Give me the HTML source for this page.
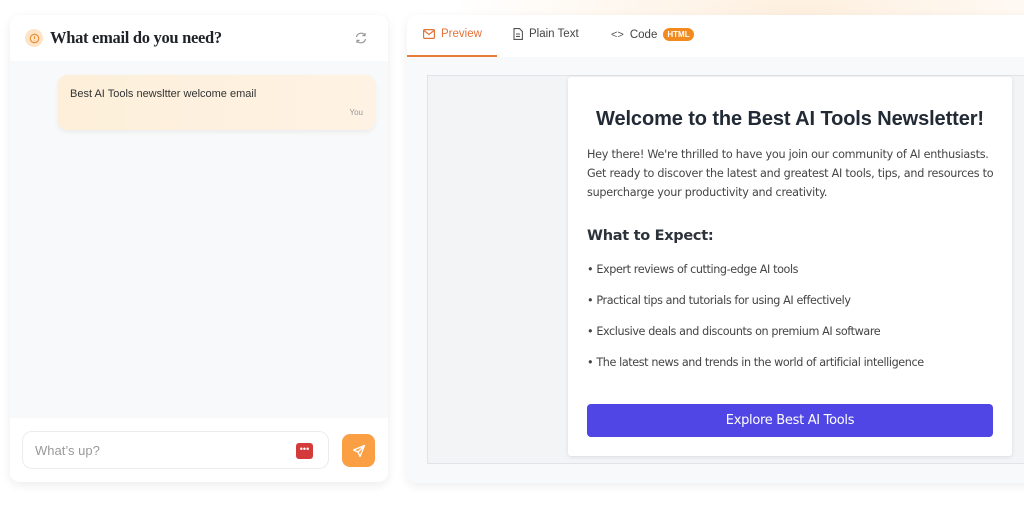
<!DOCTYPE html>
<html><head><meta charset="utf-8"><style>
*{box-sizing:border-box;margin:0;padding:0}
body{width:1024px;height:508px;overflow:hidden;background:#fff;font-family:"Liberation Sans",sans-serif;position:relative}
.glow{position:absolute;left:450px;top:-60px;width:700px;height:140px;background:radial-gradient(ellipse at center,rgba(253,226,195,.55),rgba(255,255,255,0) 70%)}
.left{position:absolute;left:10px;top:15px;width:378px;height:467px;background:#f8f9fa;border-radius:10px;box-shadow:0 3px 10px rgba(0,0,0,.08);overflow:hidden}
.lh{height:46px;background:#fff;display:flex;align-items:center;padding-left:15px}
.ic{width:18px;height:18px;border-radius:50%;background:#fde4c8;display:flex;align-items:center;justify-content:center}
.lh h1{font-family:"Liberation Serif",serif;font-size:16.5px;font-weight:bold;color:#1f2328;margin-left:7px;letter-spacing:-.3px}
.msg{position:absolute;left:48px;top:60px;width:317px;height:55px;border-radius:9px;background:linear-gradient(90deg,#fdefd9,#fef2e4);box-shadow:0 2px 5px rgba(0,0,0,.06)}
.msg p{font-size:11px;color:#333;position:absolute;left:12px;top:13px}
.msg span{font-size:8px;color:#999;position:absolute;right:12px;top:33px}
.lf{position:absolute;left:0;top:403px;width:378px;height:64px;background:#fff}
.inp{position:absolute;left:12px;top:13px;width:307px;height:38px;border:1px solid #ececec;border-radius:10px;font-size:13px;color:#9a9a9a;padding:11px 12px}
.dots{position:absolute;right:15px;top:11px;width:17px;height:16px;background:#d43a3a;border-radius:3px;color:#fff;font-size:9px;text-align:center;line-height:13px}
.send{position:absolute;left:332px;top:16px;width:33px;height:33px;background:#fb9f45;border-radius:8px;display:flex;align-items:center;justify-content:center}
.right{position:absolute;left:407px;top:15px;width:640px;height:468px;background:#f8f9fa;border-radius:10px;box-shadow:0 3px 10px rgba(0,0,0,.07);overflow:hidden}
.tabs{height:42px;background:#fff;display:flex;align-items:center;font-size:11.5px;color:#444;position:relative}
.tab{display:flex;align-items:center;gap:6px;position:absolute;top:13px}
.ul{position:absolute;left:0;top:40px;width:90px;height:2px;background:#e67e3a}
.badge{background:#f28b1f;color:#fff;font-size:8px;font-weight:bold;border-radius:8px;padding:2px 4px}
.frame{position:absolute;left:20px;top:60px;width:640px;height:389px;background:#f2f4f6;border:1px solid #e1e3e6}
.card{position:absolute;left:161px;top:62px;width:444px;height:379px;background:#fff;border-radius:3px;box-shadow:0 1px 4px rgba(0,0,0,.1);font-family:"DejaVu Sans","Liberation Sans",sans-serif;color:#444}
.card h2{font-family:"Liberation Sans",sans-serif;font-size:20px;font-weight:bold;color:#222a35;text-align:center;position:absolute;top:31px;width:100%;letter-spacing:-.1px}
.card .p{position:absolute;left:19px;top:68px;width:410px;font-size:11.2px;line-height:19px;letter-spacing:-.25px}
.card h3{position:absolute;left:19px;top:151px;font-size:14.5px;color:#2d333b;letter-spacing:-.3px}
.li{position:absolute;left:19px;font-size:11.2px;letter-spacing:-.4px}
.btn{position:absolute;left:19px;top:327px;width:406px;height:33px;background:#4f46e5;border-radius:4px;color:#fff;font-size:13px;text-align:center;line-height:33px;letter-spacing:-.3px}
</style></head><body>
<div class="glow"></div>
<div class="left">
 <div class="lh"><div class="ic"><svg width="11" height="11" viewBox="0 0 12 12"><circle cx="6" cy="6" r="4.6" fill="none" stroke="#e8892a" stroke-width="1.2"/><path d="M6 3.6v3M6 8.2v.4" stroke="#e8892a" stroke-width="1.2"/></svg></div><h1>What email do you need?</h1>
 <svg style="position:absolute;left:344px;top:16px" width="14" height="14" viewBox="0 0 14 14" fill="none" stroke="#999" stroke-width="1.2"><path d="M2.5 6a4.6 4.6 0 0 1 8.5-1.5M11.5 8a4.6 4.6 0 0 1-8.5 1.5"/><path d="M11 2v2.6H8.4M3 12V9.4h2.6"/></svg></div>
 <div class="msg"><p>Best AI Tools newsltter welcome email</p><span>You</span></div>
 <div class="lf"><div class="inp">What’s up?<div class="dots">•••</div></div>
 <div class="send"><svg width="14" height="14" viewBox="0 0 14 14" fill="none" stroke="#fff" stroke-width="1.3" stroke-linejoin="round"><path d="M12.5 1.5L1.5 6l4.5 2 2 4.5z M12.5 1.5L6 8"/></svg></div></div>
</div>
<div class="right">
 <div class="tabs">
  <div class="tab" style="left:16px;color:#e0733a"><svg width="12" height="10" viewBox="0 0 12 10" fill="none" stroke="#e0733a" stroke-width="1.2"><rect x=".6" y=".6" width="10.8" height="8.8" rx="1.2"/><path d="M1 1.5l5 4 5-4"/></svg>Preview</div>
  <div class="ul"></div>
  <div class="tab" style="left:106px"><svg width="10" height="12" viewBox="0 0 10 12" fill="none" stroke="#555" stroke-width="1.1"><path d="M1 .6h5.5L9.4 3.5v7.9H1z M3 6h4M3 8.4h4"/></svg>Plain Text</div>
  <div class="tab" style="left:204px"><span style="font-size:11px;color:#555">&lt;&gt;</span>Code <span class="badge">HTML</span></div>
 </div>
 <div class="frame"></div>
 <div class="card">
  <h2>Welcome to the Best AI Tools Newsletter!</h2>
  <div class="p">Hey there! We're thrilled to have you join our community of AI enthusiasts. Get ready to discover the latest and greatest AI tools, tips, and resources to supercharge your productivity and creativity.</div>
  <h3>What to Expect:</h3>
  <div class="li" style="top:186px">• Expert reviews of cutting-edge AI tools</div>
  <div class="li" style="top:217px">• Practical tips and tutorials for using AI effectively</div>
  <div class="li" style="top:248px">• Exclusive deals and discounts on premium AI software</div>
  <div class="li" style="top:279px">• The latest news and trends in the world of artificial intelligence</div>
  <div class="btn">Explore Best AI Tools</div>
 </div>
</div>
</body></html>
